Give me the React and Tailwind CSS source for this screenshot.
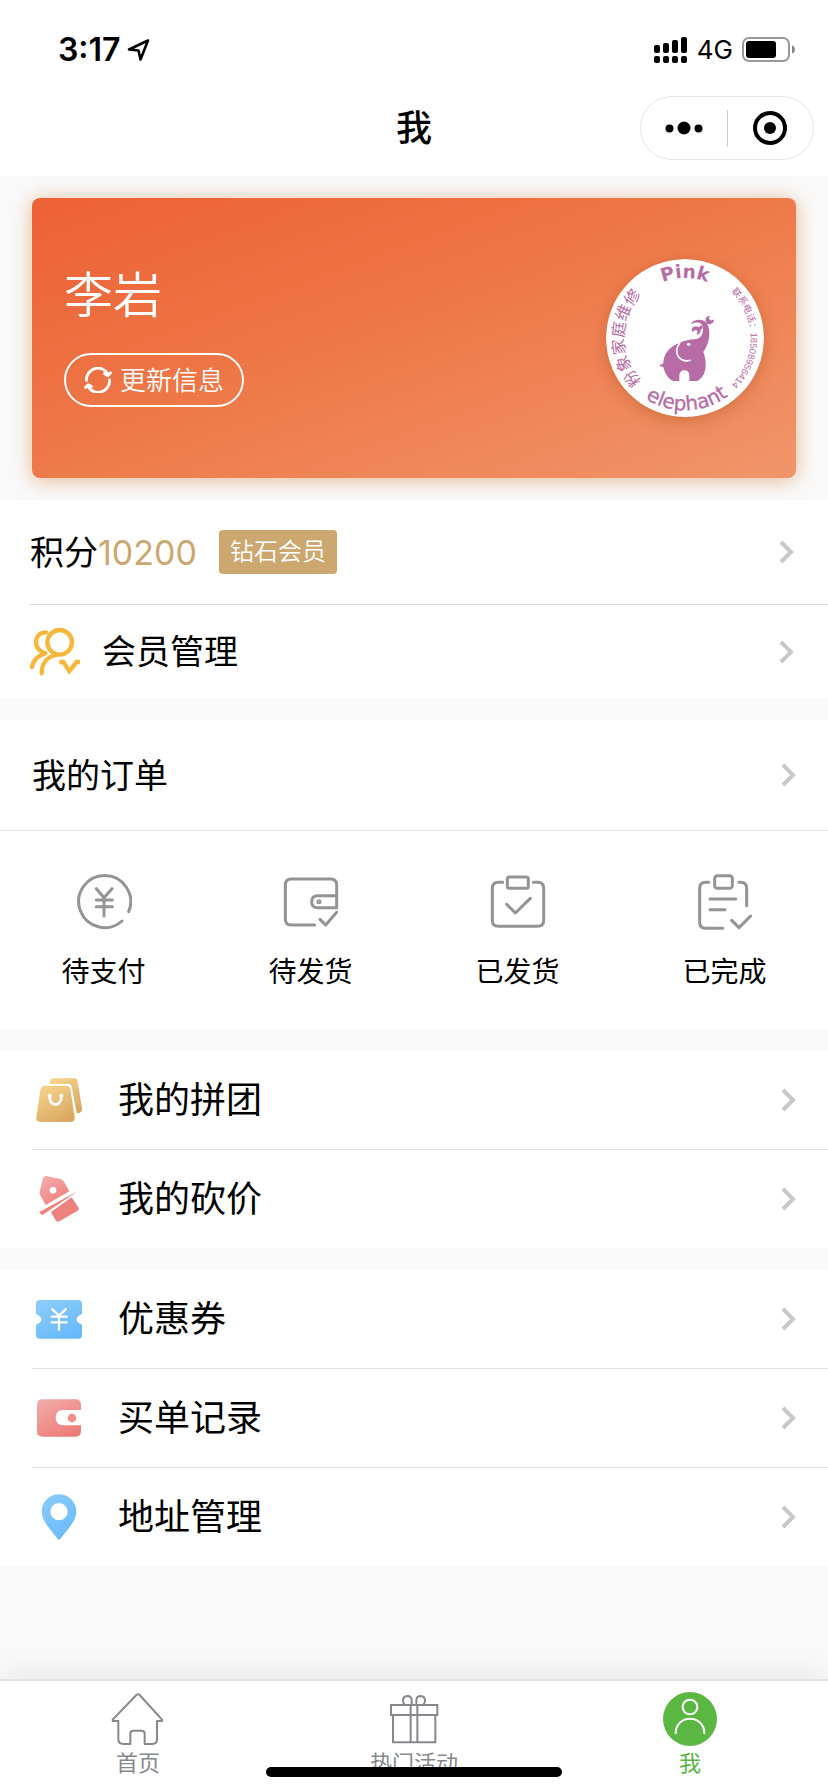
import React from "react";

const stroke = { fill: "none", strokeLinecap: "round", strokeLinejoin: "round" };

function Chevron() {
  return (
    <svg viewBox="0 0 16 24" className="h-6 w-4 shrink-0" fill="none" stroke="#c8c8c8" strokeWidth="4" aria-hidden="true">
      <path d="M3 2L13 12L3 22" />
    </svg>
  );
}

function StatusBar() {
  return (
    <div className="flex h-20 items-center justify-between pt-5 pr-8 pl-[58px]">
      <div className="flex items-center gap-[5px]">
        <span className="text-[32px] leading-10 font-semibold">3:17</span>
        <svg viewBox="0 0 24 24" className="size-6" {...stroke} stroke="#000" strokeWidth="2.6" aria-hidden="true">
          <path d="M22 2.500L3 11.500L12.500 12.500L14.500 21.500Z" />
        </svg>
      </div>
      <div className="flex items-center gap-[9px]">
        <svg viewBox="0 0 34 26" className="h-[26px] w-[34px]" aria-hidden="true">
          <rect x="0" y="8" width="6" height="8" rx="2" />
          <rect x="9" y="6" width="6" height="10" rx="2" />
          <rect x="18" y="3" width="6" height="13" rx="2" />
          <rect x="27" y="0" width="6" height="16" rx="2" />
          <rect x="0" y="19" width="6" height="7" rx="2" />
          <rect x="9" y="19" width="6" height="7" rx="2" />
          <rect x="18" y="19" width="6" height="7" rx="2" />
          <rect x="27" y="19" width="6" height="7" rx="2" />
        </svg>
        <span className="text-[26px] leading-8">4G</span>
        <svg viewBox="0 0 54 26" className="h-[26px] w-[54px]" aria-hidden="true">
          <rect x="1" y="1" width="46" height="23" rx="6" fill="none" stroke="#999" strokeWidth="2" />
          <rect x="4" y="4" width="30" height="17" rx="3" />
          <path d="M50 8.500C54 9.500 54 15.500 50 16.500Z" fill="#888" />
        </svg>
      </div>
    </div>
  );
}

function TitleBar() {
  return (
    <header className="grid h-24 grid-cols-3 items-center pr-[14px]">
      <span />
      <h1 className="pl-[14px] text-center text-[36px] leading-[48px] font-medium">我</h1>
      <div className="flex h-16 w-[174px] items-center justify-self-end rounded-full border border-[#e6e6e6]">
        <button type="button" aria-label="更多" className="flex flex-1 justify-center">
          <svg viewBox="0 0 38 14" className="h-[14px] w-[38px]" aria-hidden="true">
            <circle cx="4.500" cy="7.500" r="4" />
            <circle cx="19" cy="7" r="6.500" />
            <circle cx="33.500" cy="7.500" r="4" />
          </svg>
        </button>
        <span className="h-[37px] w-px bg-[#ccc]" />
        <button type="button" aria-label="关闭" className="flex flex-1 justify-center">
          <svg viewBox="0 0 34 34" className="size-[34px]" aria-hidden="true">
            <circle cx="17" cy="17" r="15" fill="none" stroke="#000" strokeWidth="4" />
            <circle cx="17" cy="17" r="6" />
          </svg>
        </button>
      </div>
    </header>
  );
}

function ElephantLogo() {
  return (
    <svg viewBox="78 87 474 474" className="size-[158px] shrink-0 rounded-full shadow-[0_4px_16px_rgba(150,60,10,0.3)]" role="img" aria-label="Pink elephant">
      <defs>
        <path id="arc-top" d="M135 324A180 180 0 0 1 495 324" />
        <path id="arc-left" d="M315 507A183 183 0 0 1 315 141" />
        <path id="arc-right" d="M315 127A197 197 0 0 1 315 521" />
        <path id="arc-bottom" d="M98 324A217 217 0 0 0 532 324" />
      </defs>
      <circle cx="315" cy="324" r="237" fill="#fff" />
      <g fill="#b76ca5" textAnchor="middle">
        <text className="font-['DejaVu_Sans',sans-serif] text-[56px] font-bold">
          <textPath href="#arc-top" startOffset="50%">Pink</textPath>
        </text>
        <text className="font-['DejaVu_Sans',sans-serif] text-[60px]" stroke="#b76ca5" strokeWidth="1">
          <textPath href="#arc-bottom" startOffset="51%">elephant</textPath>
        </text>
        <text className="font-['Noto_Sans_CJK_SC',sans-serif] text-[48px]">
          <textPath href="#arc-left" startOffset="50%">粉象家庭维修</textPath>
        </text>
        <text className="font-['Liberation_Sans','Noto_Sans_CJK_SC',sans-serif] text-[28px]">
          <textPath href="#arc-right" startOffset="50%">联系电话：18508956414</textPath>
        </text>
      </g>
      <path
        fill="#b76ca5"
        d="M296 340C266 350 250 376 250 400L237 407L250 411C254 430 265 446 279 453L298 453L298 438C298 427 305 421 313 421C322 421 328 427 328 438L328 453L352 453C370 443 378 425 377 400C376 385 374 375 370 366C379 352 389 335 388 303C387 282 375 268 355 269C344 270 337 274 333 282C343 277 352 276 360 279C368 284 371 292 369 303C366 318 360 324 350 327C325 328 309 333 296 340Z"
      />
      <path d="M299 340C285 358 288 380 306 389C314 393 322 394 330 391" fill="none" stroke="#fff" strokeWidth="5" strokeLinecap="round" />
      <circle cx="326" cy="343" r="5" fill="#fff" />
      <path fill="#b76ca5" d="M391 257C380 257 375 266 377 274C378 283 389 285 396 280C401 277 403 273 402 268C397 273 391 272 388 268C386 263 388 260 391 257Z" />
      <path fill="#b76ca5" d="M336 296C341 288 350 287 356 292L365 285L369 294L362 300C363 307 358 313 349 315C353 309 354 304 350 301C346 299 341 302 338 306C335 303 335 299 336 296Z" />
    </svg>
  );
}

function ProfileCard() {
  return (
    <section className="bg-[#fafafa] px-8 pt-[22px] pb-[22px]">
      <div className="flex h-[280px] items-center justify-between rounded-lg bg-[linear-gradient(160deg,#ed6135_0%,#ee7747_45%,#f0966b_100%)] px-8 shadow-[0_2px_20px_rgba(205,130,60,0.55)]">
        <div className="flex flex-col items-start gap-[26px] pb-1">
          <h2 className="text-[49px] leading-[62px] font-[350] text-white">李岩</h2>
          <button type="button" className="flex h-[54px] w-[180px] items-center justify-center gap-2 rounded-full border-2 border-white text-[26px] font-[350] text-white">
            <svg viewBox="0 0 28 26" className="h-[26px] w-7" {...stroke} stroke="#fff" strokeWidth="2.800" aria-hidden="true">
              <path d="M2.500 13.500A11.500 11.500 0 0 1 24 7" />
              <path d="M20.500 6.500L23.800 8.800L26.500 5.800" />
              <path d="M25.500 13A11.500 11.500 0 0 1 4 19.500" />
              <path d="M7.500 19.500L4.200 17.800L1.500 20.500" />
            </svg>
            更新信息
          </button>
        </div>
        <ElephantLogo />
      </div>
    </section>
  );
}

function MembersIcon() {
  return (
    <svg viewBox="90 408 150 150" className="size-[50px] shrink-0" {...stroke} stroke="#f6b73c" strokeWidth="13" aria-hidden="true">
      <circle cx="179" cy="454" r="37" />
      <path d="M138 424C118 424 108 438 108 454C108 469 119 481 136 487C115 492 99 508 96 528" />
      <path d="M168 492C143 497 125 515 125 547" />
      <path d="M178 513L190 513L208 540L230 513L240 513" strokeLinecap="butt" strokeLinejoin="miter" />
    </svg>
  );
}

function MemberSection() {
  return (
    <section className="bg-white pl-[30px]">
      <a href="#points" className="flex h-[105px] items-center border-b border-[#d8d8d8] pr-[34px] text-[34px]">
        <span>积分</span>
        <span className="text-[#cca76f]">10200</span>
        <span className="ml-[22px] flex h-11 items-center rounded bg-[#cca76f] px-[11px] text-[24px] font-[350] text-white">钻石会员</span>
        <span className="ml-auto"><Chevron /></span>
      </a>
      <a href="#members" className="flex h-[93px] items-center pr-[34px] text-[34px]">
        <MembersIcon />
        <span className="ml-[22px]">会员管理</span>
        <span className="ml-auto"><Chevron /></span>
      </a>
    </section>
  );
}

const orders = [
  {
    label: "待支付",
    box: "229 103 168 168",
    art: (
      <>
        <path d="M387 216A78 78 0 1 0 367 244" />
        <path d="M290 147L313 174L337 147M290 181H338M290 201H338M313 174V229" />
      </>
    ),
  },
  {
    label: "待发货",
    box: "849 103 168 168",
    art: (
      <>
        <path d="M944 256H874Q856 256 856 238V136Q856 118 874 118H992Q1010 118 1010 136V204H953Q935 204 935 186Q935 168 953 168H1008" />
        <circle cx="957" cy="186" r="3" />
        <path d="M960 239L977 256L1010 218" />
      </>
    ),
  },
  {
    label: "已发货",
    box: "210 103 168 168",
    art: (
      <>
        <path d="M248 128H235Q217 128 217 146V242Q217 260 235 260H353Q371 260 371 242V146Q371 128 353 128H340" />
        <rect x="262" y="112" width="63" height="34" rx="6" />
        <path d="M260 194L286 220L331 176" />
      </>
    ),
  },
  {
    label: "已完成",
    box: "837 103 168 168",
    art: (
      <>
        <path d="M872 128H863Q845 128 845 146V248Q845 266 863 266H914" />
        <path d="M963 128H968Q986 128 986 146V198" />
        <rect x="890" y="108" width="53" height="38" rx="8" />
        <path d="M876 178H953M876 210H921M941 242L963 264L998 229" />
      </>
    ),
  },
];

function OrderSection() {
  return (
    <section className="bg-white">
      <a href="#orders" className="flex h-[111px] items-center justify-between border-b border-[#e2e2e2] pr-8 pl-8 text-[34px]">
        我的订单
        <Chevron />
      </a>
      <div className="grid grid-cols-4 pt-[43px] pb-[37px]">
        {orders.map((o) => (
          <a key={o.label} href="#orders" className="flex flex-col items-center gap-[22px] text-[28px] leading-10">
            <svg viewBox={o.box} className="size-14" {...stroke} stroke="#949494" strokeWidth="9" aria-hidden="true">
              {o.art}
            </svg>
            {o.label}
          </a>
        ))}
      </div>
    </section>
  );
}

function Gradient({ id, from, to }) {
  return (
    <linearGradient id={id} x1="0.2" y1="0" x2="0.8" y2="1">
      <stop offset="0" stopColor={from} />
      <stop offset="1" stopColor={to} />
    </linearGradient>
  );
}

const groupRows = [
  {
    label: "我的拼团",
    box: "108 110 138 138",
    art: (
      <>
        <defs><Gradient id="gold" from="#f6d48b" to="#d8a661" /></defs>
        <path fill="url(#gold)" d="M148 131C149 120 153 114 162 114H222Q231 114 233 123L246 205Q247 214 240 217L230 219L215 138Q213 131 205 131Z" />
        <path fill="url(#gold)" d="M137 136H199Q209 136 211 146L224 230Q225 245 211 245H121Q107 245 109 230L121 148Q123 136 137 136Z" />
        <path d="M149 166C147 202 186 202 184 166" fill="none" stroke="#fff" strokeWidth="8" strokeLinecap="round" />
        <circle cx="149" cy="166" r="6" fill="#fff" />
        <circle cx="184" cy="166" r="6" fill="#fff" />
      </>
    ),
  },
  {
    label: "我的砍价",
    box: "108 408 138 138",
    art: (
      <>
        <defs><Gradient id="rose" from="#f3abab" to="#ee7e7a" /></defs>
        <path fill="url(#rose)" fillRule="evenodd" d="M139 408L182 417Q188 419 191 424L208 454L137 495L120 464Q118 460 119 455L129 414Q132 407 139 408ZM159 441A10 10 0 1 0 159 461A10 10 0 1 0 159 441Z" />
        <path fill="#ee827e" d="M118 516L234 453L126 526Z" />
        <path fill="#ee827e" d="M153 516L215 472L235 502Q239 508 233 512L178 544Q171 548 167 541Z" />
      </>
    ),
  },
];

const serviceRows = [
  {
    label: "优惠券",
    box: "108 109 138 138",
    art: (
      <>
        <defs><Gradient id="sky" from="#8acbfb" to="#66b9fa" /></defs>
        <path fill="url(#sky)" d="M120 121H234Q246 121 246 133V162C240 165 240 167 236 168Q230 173 230 179Q230 186 236 190C240 191 241 193 246 196V225Q246 237 234 237H120Q108 237 108 225V196C113 193 114 191 118 190Q124 186 124 179Q124 173 118 168C114 167 113 165 108 162V133Q108 121 120 121Z" />
        <path d="M157 149L177 168L197 149M155 171H200M155 188H200M177 168V210" stroke="#fff" strokeWidth="7" strokeLinecap="round" fill="none" />
      </>
    ),
  },
  {
    label: "买单记录",
    box: "108 405 138 138",
    art: (
      <>
        <defs><Gradient id="wallet" from="#f2a9a7" to="#ed7b76" /></defs>
        <path fill="url(#wallet)" d="M128 418H226Q243 418 243 434V450H190Q167 451 167 473Q167 495 190 496H243V514Q243 530 226 530H128Q111 530 111 514V434Q111 418 128 418Z" />
        <circle cx="216" cy="474" r="13" fill="#ef8f8b" />
      </>
    ),
  },
  {
    label: "地址管理",
    box: "108 701 138 138",
    art: (
      <>
        <defs><Gradient id="pin" from="#8acbfb" to="#66b9fa" /></defs>
        <path fill="url(#pin)" fillRule="evenodd" d="M177 702C206 702 229 725 229 754C229 784 195 816 180 837Q177 840 174 837C159 816 125 784 125 754C125 725 148 702 177 702ZM177 728A26 26 0 1 0 177 780A26 26 0 1 0 177 728Z" />
      </>
    ),
  },
];

function RowSection({ rows }) {
  return (
    <section className="divide-y divide-[#e2e2e2] bg-white pl-8">
      {rows.map((r) => (
        <a key={r.label} href="#service" className="flex h-[99px] items-center pr-8 text-[36px] last:h-[98px]">
          <svg viewBox={r.box} className="ml-1 size-[46px] shrink-0" aria-hidden="true">
            {r.art}
          </svg>
          <span className="ml-9">{r.label}</span>
          <span className="ml-auto"><Chevron /></span>
        </a>
      ))}
    </section>
  );
}

function TabBar() {
  const tab = "flex flex-1 flex-col items-center gap-1 text-[22px] leading-6";
  return (
    <nav className="relative mt-auto flex border-t-2 border-[#e4e4e4] bg-white pt-[10px] pb-[17px] text-[#85888c] shadow-[0_0_40px_rgba(0,0,0,0.1)]">
      <a href="#home" className={tab}>
        <svg viewBox="63 33 168 168" className="size-14" {...stroke} stroke="#85888c" strokeWidth="6" aria-hidden="true">
          <path d="M142 45Q147 41 152 45L219 119V123H204V178Q204 192 190 192H167V161Q167 152 158 152H133Q124 152 124 161V192H103Q88 192 88 178V123H71V119Z" />
        </svg>
        首页
      </a>
      <a href="#events" className={tab}>
        <svg viewBox="81 35 168 168" className="size-14" fill="none" stroke="#85888c" strokeWidth="6" aria-hidden="true">
          <path d="M96 77H235V107H96ZM102 107V189H229V107M155 77V189M175 77V189" />
          <path d="M158 75V62Q157 50 145 50Q132 51 132 64Q132 71 137 75M172 75V62Q173 50 185 50Q198 51 198 64Q198 71 193 75" />
        </svg>
        热门活动
      </a>
      <a href="#me" aria-current="page" className={tab + " text-[#5ab741]"}>
        <svg viewBox="909 36 168 168" className="size-14" {...stroke} stroke="#fff" strokeWidth="6" aria-hidden="true">
          <circle cx="993" cy="120" r="81" fill="#5ab741" stroke="none" />
          <circle cx="993" cy="84" r="22" />
          <path d="M950 163C950 105 1036 105 1036 163" />
        </svg>
        我
      </a>
      <span className="absolute bottom-[15px] left-1/2 h-[10px] w-[296px] -translate-x-1/2 rounded-full bg-black" />
    </nav>
  );
}

export default function App() {
  return (
    <div className="flex min-h-screen flex-col bg-[#fafafa] font-['Inter','Noto_Sans_CJK_SC',sans-serif] text-black">
      <div className="bg-white">
        <StatusBar />
        <TitleBar />
      </div>
      <main className="flex flex-col gap-[22px] pb-8">
        <div>
          <ProfileCard />
          <MemberSection />
        </div>
        <OrderSection />
        <RowSection rows={groupRows} />
        <RowSection rows={serviceRows} />
      </main>
      <TabBar />
    </div>
  );
}
